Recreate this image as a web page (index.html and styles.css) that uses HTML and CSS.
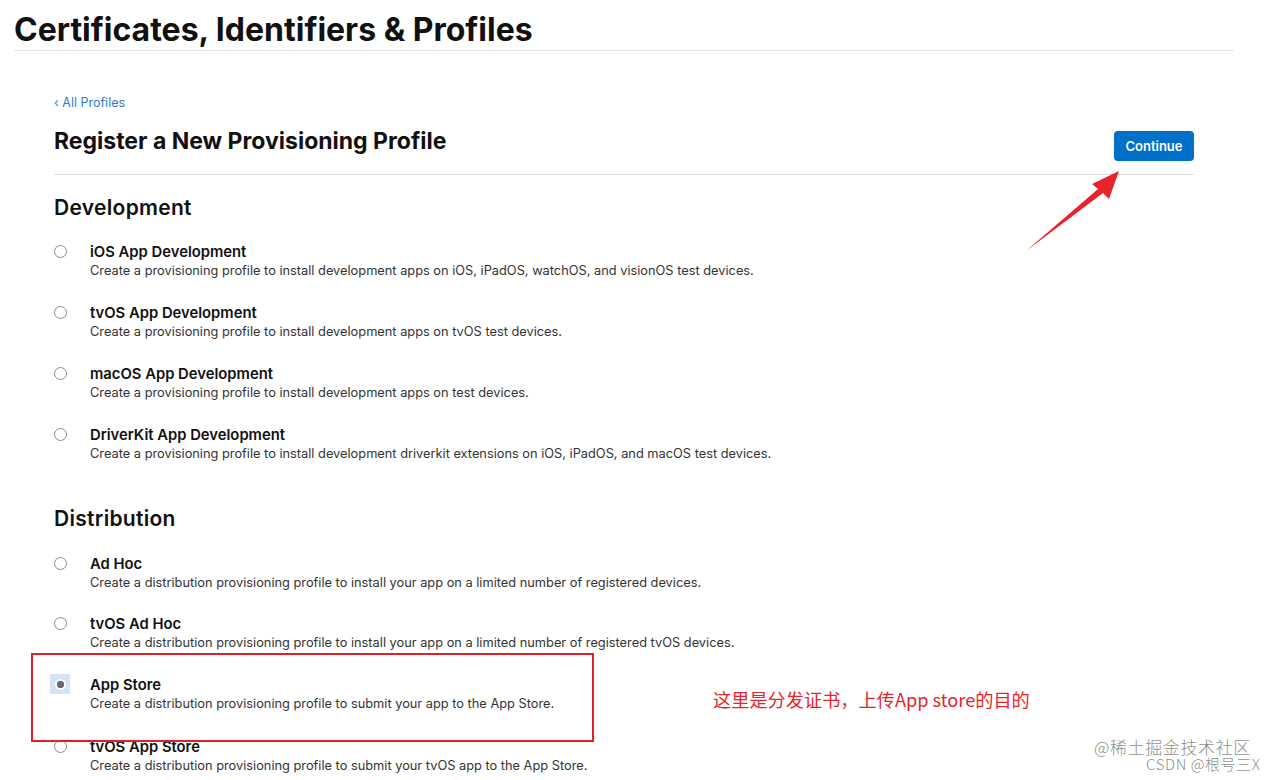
FILE: index.html
```html
<!DOCTYPE html>
<html>
<head>
<meta charset="utf-8">
<link rel="stylesheet" href="styles.css">
</head>
<body>
<header class="top">
  <h1 class="site-title">Certificates, Identifiers &amp; Profiles</h1>
</header>
<main class="content">
  <a class="back" href="#">‹ All Profiles</a>
  <div class="head-row">
    <h2 class="page-title">Register a New Provisioning Profile</h2>
    <button class="continue">Continue</button>
  </div>
  <section class="group">
    <h3 class="group-title">Development</h3>
    <div class="option"><span class="radio"></span><div class="text"><div class="opt-title">iOS App Development</div><div class="opt-desc">Create a provisioning profile to install development apps on iOS, iPadOS, watchOS, and visionOS test devices.</div></div></div>
    <div class="option"><span class="radio"></span><div class="text"><div class="opt-title">tvOS App Development</div><div class="opt-desc">Create a provisioning profile to install development apps on tvOS test devices.</div></div></div>
    <div class="option"><span class="radio"></span><div class="text"><div class="opt-title">macOS App Development</div><div class="opt-desc">Create a provisioning profile to install development apps on test devices.</div></div></div>
    <div class="option"><span class="radio"></span><div class="text"><div class="opt-title">DriverKit App Development</div><div class="opt-desc">Create a provisioning profile to install development driverkit extensions on iOS, iPadOS, and macOS test devices.</div></div></div>
  </section>
  <section class="group dist">
    <h3 class="group-title">Distribution</h3>
    <div class="option h60"><span class="radio"></span><div class="text"><div class="opt-title">Ad Hoc</div><div class="opt-desc">Create a distribution provisioning profile to install your app on a limited number of registered devices.</div></div></div>
    <div class="option h61"><span class="radio"></span><div class="text"><div class="opt-title">tvOS Ad Hoc</div><div class="opt-desc">Create a distribution provisioning profile to install your app on a limited number of registered tvOS devices.</div></div></div>
    <div class="option h62"><span class="radio checked"></span><div class="text"><div class="opt-title">App Store</div><div class="opt-desc">Create a distribution provisioning profile to submit your app to the App Store.</div></div></div>
    <div class="option"><span class="radio"></span><div class="text"><div class="opt-title">tvOS App Store</div><div class="opt-desc">Create a distribution provisioning profile to submit your tvOS app to the App Store.</div></div></div>
  </section>
</main>
<div class="highlight-box"></div>
<div class="note">这里是分发证书，上传App store的目的</div>
<svg class="arrow" width="100" height="90" viewBox="0 0 100 90">
  <path d="M4 84 L76 22 L70 17 L97 4 L87 32 L81 26 Z" fill="#e8232b"/>
</svg>
<div class="wm wm1">@稀土掘金技术社区</div>
<div class="wm wm2">CSDN @根号三X</div>
</body>
</html>
```
FILE: styles.css
```css
* { box-sizing: border-box; }
html, body { margin: 0; padding: 0; background: #fff; }
body {
  font-family: "Inter", "Liberation Sans", "Noto Sans CJK SC", sans-serif;
  color: #1d1d1f;
  width: 1278px;
  height: 780px;
  overflow: hidden;
  position: relative;
}
.top {
  margin: 0 44px 0 14px;
  border-bottom: 1px solid #e2e2e2;
  height: 51px;
}
.site-title {
  margin: 0;
  padding-top: 11px;
  font-size: 32px;
  line-height: 38px;
  font-weight: 700;
  letter-spacing: 0;
  color: #111;
}
.content {
  margin: 0 84px 0 54px;
  padding-top: 44px;
}
.back {
  display: block;
  font-size: 12.5px;
  line-height: 16px;
  color: #2f7bc6;
  text-decoration: none;
}
.head-row {
  display: flex;
  justify-content: space-between;
  align-items: flex-start;
  border-bottom: 1px solid #dcdcdc;
  height: 64px;
  padding-top: 16px;
}
.page-title {
  margin: 0;
  font-size: 23px;
  line-height: 28px;
  font-weight: 700;
  letter-spacing: 0;
  color: #111;
}
.continue {
  margin-top: 4px;
  width: 80px;
  height: 30px;
  border: 0;
  border-radius: 4px;
  background: #0070c9;
  color: #fff;
  font-family: inherit;
  font-size: 13px;
  font-weight: 600;
  padding: 0;
}
.group { padding-top: 20px; }
.group.dist { padding-top: 19px; }
.group-title {
  margin: 0 0 22px;
  font-size: 21px;
  line-height: 26px;
  font-weight: 600;
  letter-spacing: 0.3px;
  color: #111;
}
.dist .group-title { margin-bottom: 23px; }
.option {
  display: flex;
  align-items: flex-start;
  height: 61px;
}
.option.h60 { height: 60px; }
.option.h61 { height: 61px; }
.option.h62 { height: 62px; }
.radio {
  width: 13px;
  height: 13px;
  border: 1px solid #8a8a8a;
  border-radius: 50%;
  margin-top: 2px;
  margin-right: 23px;
  flex: none;
  background: #fff;
  position: relative;
}
.radio.checked {
  border: 1.5px solid #6d6d6d;
  isolation: isolate;
  background: transparent;
}
.radio.checked::before {
  content: "";
  position: absolute;
  left: -5px; top: -5px;
  width: 20px; height: 20px;
  background: #d3e4f7;
  z-index: -1;
}
.radio.checked::after {
  content: "";
  position: absolute;
  left: 0; top: 0;
  width: 100%; height: 100%;
  border-radius: 50%;
  background: radial-gradient(circle, #6a6a6a 0 3.4px, #ffffff 4px);
}
.opt-title {
  font-size: 14.8px;
  line-height: 19px;
  font-weight: 600;
  color: #111;
}
.opt-desc {
  font-size: 12.8px;
  line-height: 18px;
  color: #333;
}
.highlight-box {
  position: absolute;
  left: 31px; top: 653px;
  width: 563px; height: 89px;
  border: 2px solid #e0202a;
}
.note {
  position: absolute;
  left: 713px; top: 687px;
  font-family: "Noto Sans CJK SC", sans-serif;
  font-size: 18.2px;
  line-height: 24px;
  color: #e8232b;
  letter-spacing: 0;
}
.arrow {
  position: absolute;
  left: 1022px; top: 167px;
}
.wm {
  position: absolute;
  font-family: "Noto Sans CJK SC", sans-serif;
  font-weight: 300;
  color: rgba(110,110,110,0.8);
  white-space: nowrap;
}
.wm1 {
  left: 1094px; top: 739px;
  font-size: 17px;
  line-height: 16px;
  letter-spacing: 0.6px;
}
.wm2 {
  left: 1146px; top: 757px;
  font-size: 15px;
  line-height: 14px;
  letter-spacing: 0.6px;
}
```
